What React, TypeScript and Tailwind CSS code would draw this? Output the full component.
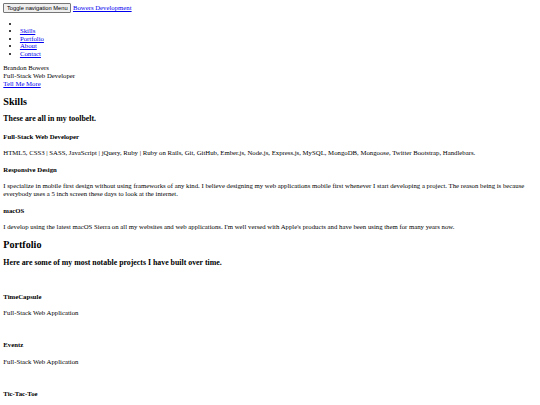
const skills = [
  {
    title: "Full-Stack Web Developer",
    text: "HTML5, CSS3 | SASS, JavaScript | jQuery, Ruby | Ruby on Rails, Git, GitHub, Ember.js, Node.js, Express.js, MySQL, MongoDB, Mongoose, Twitter Bootstrap, Handlebars.",
  },
  {
    title: "Responsive Design",
    text: "I specialize in mobile first design without using frameworks of any kind. I believe designing my web applications mobile first whenever I start developing a project. The reason being is because everybody uses a 5 inch screen these days to look at the internet.",
  },
  {
    title: "macOS",
    text: "I develop using the latest macOS Sierra on all my websites and web applications. I'm well versed with Apple's products and have been using them for many years now.",
  },
];

const projects = ["TimeCapsule", "Eventz", "Tic-Tac-Toe"];

const links = ["Skills", "Portfolio", "About", "Contact"];

const App = () => {
  return (
    <div className="h-[405px] overflow-hidden bg-white p-[3.32px] font-['Liberation_Serif',serif] text-[6.75px] leading-[7.64px] text-black">
      <nav className="leading-[8.7px]">
        <button className="rounded-[1px] border-[0.83px] border-[#767676] bg-[#efefef] px-[2.6px] py-[0.6px] align-baseline font-['Liberation_Sans',sans-serif] text-[5.75px] leading-[6.4px] text-black">
          Toggle navigation Menu
        </button>{" "}
        <a href="#" className="text-[#0000ee] underline">
          Bowers Development
        </a>
        <ul className="my-[6.64px] list-disc pl-[16.6px] leading-[7.64px]">
          <li className="h-[7.64px]"></li>
          {links.map((l) => (
            <li key={l}>
              <a href="#" className="text-[#0000ee] underline">
                {l}
              </a>
            </li>
          ))}
        </ul>
      </nav>

      <header>
        <div>Brandon Bowers</div>
        <div>Full-Stack Web Developer</div>
        <a href="#" className="text-[#0000ee] underline">
          Tell Me More
        </a>
      </header>

      <section>
        <h2 className="my-[8.27px] text-[10.1px] leading-[11.45px] font-bold">Skills</h2>
        <h3 className="my-[7.77px] text-[7.85px] leading-[8.93px] font-bold">These are all in my toolbelt.</h3>
        {skills.map((s) => (
          <div key={s.title}>
            <h4 className="my-[8.83px] font-bold">{s.title}</h4>
            <p className="my-[6.64px]">{s.text}</p>
          </div>
        ))}
      </section>

      <section>
        <h2 className="my-[8.27px] text-[10.1px] leading-[11.45px] font-bold">Portfolio</h2>
        <h3 className="my-[7.77px] text-[7.85px] leading-[8.93px] font-bold">
          Here are some of my most notable projects I have built over time.
        </h3>
        {projects.map((p) => (
          <div key={p}>
            <div className="h-[8.8px]"></div>
            <h4 className="my-[8.83px] font-bold">{p}</h4>
            <p className="my-[6.64px]">Full-Stack Web Application</p>
          </div>
        ))}
      </section>
    </div>
  );
};

export default App;
